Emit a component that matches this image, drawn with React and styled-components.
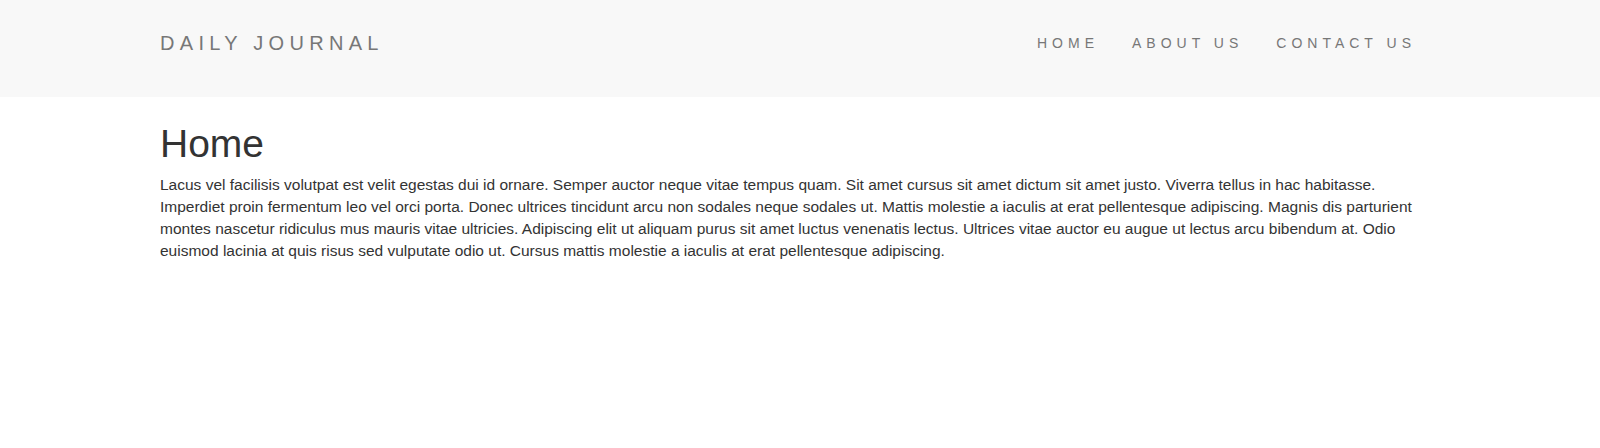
import styled, { createGlobalStyle } from "styled-components";

const GlobalStyle = createGlobalStyle`
  * { box-sizing: border-box; }
  body {
    margin: 0;
    background: #fff;
    font-family: "Liberation Sans", Arial, sans-serif;
    color: #333;
  }
`;

const Header = styled.header`
  background: #f8f8f8;
  height: 97px;
`;

const Container = styled.div`
  width: 1280px;
  margin: 0 auto;
`;

const HeaderInner = styled(Container)`
  display: flex;
  align-items: flex-start;
  justify-content: space-between;
  padding-top: 33px;
`;

const Brand = styled.a`
  font-size: 20px;
  line-height: 20px;
  letter-spacing: 5.3px;
  color: #777;
  text-decoration: none;
  text-transform: uppercase;
`;

const Nav = styled.nav`
  display: flex;
  gap: 33px;
  padding-right: 24px;
  padding-top: 3px;
`;

const NavLink = styled.a`
  font-size: 14px;
  line-height: 14px;
  letter-spacing: 5px;
  color: #777;
  text-decoration: none;
  text-transform: uppercase;
`;

const Main = styled(Container)`
  padding-top: 23px;
`;

const Title = styled.h1`
  margin: 0 0 6px;
  font-size: 39px;
  font-weight: 400;
  line-height: 48px;
  color: #333;
`;

const Text = styled.p`
  margin: 0;
  font-size: 15.5px;
  line-height: 22px;
`;

export default function App() {
  return (
    <>
      <GlobalStyle />
      <Header>
        <HeaderInner>
          <Brand href="#">Daily Journal</Brand>
          <Nav>
            <NavLink href="#">Home</NavLink>
            <NavLink href="#">About Us</NavLink>
            <NavLink href="#">Contact Us</NavLink>
          </Nav>
        </HeaderInner>
      </Header>
      <Main>
        <Title>Home</Title>
        <Text>
          Lacus vel facilisis volutpat est velit egestas dui id ornare. Semper auctor neque vitae tempus quam. Sit amet cursus sit amet dictum sit amet justo. Viverra tellus in hac habitasse. Imperdiet proin fermentum leo vel orci porta. Donec ultrices tincidunt arcu non sodales neque sodales ut. Mattis molestie a iaculis at erat pellentesque adipiscing. Magnis dis parturient montes nascetur ridiculus mus mauris vitae ultricies. Adipiscing elit ut aliquam purus sit amet luctus venenatis lectus. Ultrices vitae auctor eu augue ut lectus arcu bibendum at. Odio euismod lacinia at quis risus sed vulputate odio ut. Cursus mattis molestie a iaculis at erat pellentesque adipiscing.
        </Text>
      </Main>
    </>
  );
}
